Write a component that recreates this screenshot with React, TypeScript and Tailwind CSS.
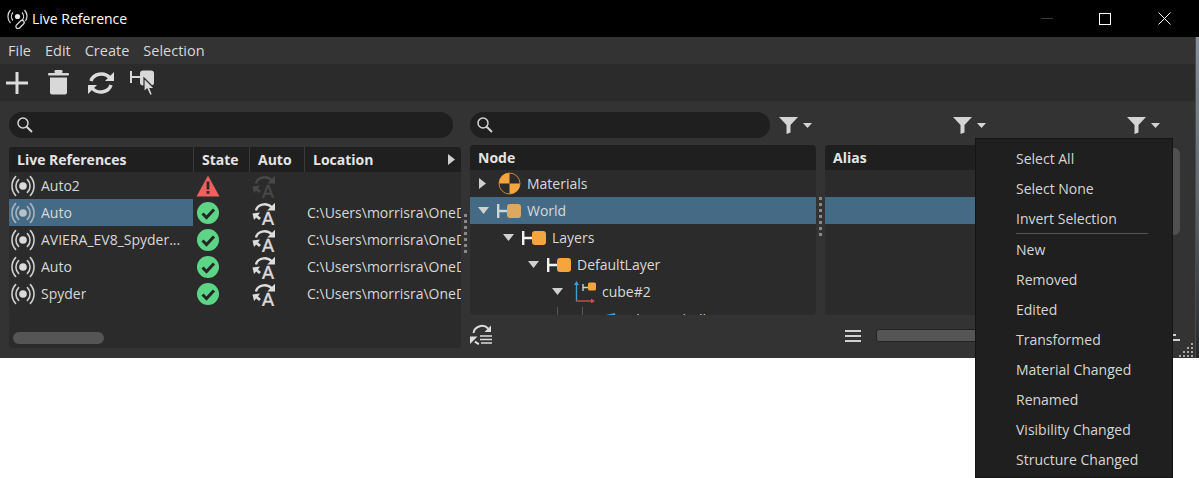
import React from "react";

const Broadcast = ({ dim = false }: { dim?: boolean }) => (
  <svg width="24" height="22" viewBox="0 0 24 22" fill="none" stroke={dim ? "#a9b4bc" : "#cfcfcf"} strokeLinecap="round" className="shrink-0">
    <circle cx="12" cy="11" r="3.8" fill={dim ? "#b9c0c6" : "#dadada"} stroke="none" />
    <path d="M7.6 4.6a9 9 0 0 0 0 12.8M16.4 4.6a9 9 0 0 1 0 12.8" strokeWidth="1.6" />
    <path d="M4.6 1.6a14 14 0 0 0 0 18.8M19.4 1.6a14 14 0 0 1 0 18.8" strokeWidth="1.6" />
  </svg>
);

const Check = () => (
  <svg width="24" height="24" viewBox="0 0 24 24" className="shrink-0">
    <circle cx="12" cy="12" r="11" fill="#5cd686" />
    <path d="M6.5 12.5l4 4 7.5-8" fill="none" stroke="#262626" strokeWidth="3" />
  </svg>
);

const Warn = () => (
  <svg width="24" height="22" viewBox="0 0 24 22" className="shrink-0">
    <path d="M12 0.5L23.5 21.5H0.5Z" fill="#f25f5f" />
    <rect x="10.6" y="6.5" width="2.8" height="8" fill="#2b2b2b" />
    <rect x="10.6" y="16" width="2.8" height="2.8" fill="#2b2b2b" />
  </svg>
);

const AutoIcon = ({ dim = false }: { dim?: boolean }) => {
  const c = dim ? "#484848" : "#dcdcdc";
  return (
    <svg width="24" height="24" viewBox="0 0 24 24" className="shrink-0">
      <path d="M4 9.5C5 4 14 0.5 20 6.5" fill="none" stroke={c} strokeWidth="2.4" />
      <path d="M23 1.8V9.6H15.2Z" fill={c} />
      <path d="M0.5 12.5L8 11.5L6 14.5L9 17L7 19L4.2 16.4L2 19Z" fill={c} />
      <text x="16" y="23.5" textAnchor="middle" fontFamily="'Liberation Sans',sans-serif" fontWeight="400" fontSize="18" stroke={c} strokeWidth="0.5" fill={c}>A</text>
    </svg>
  );
};

const HSquare = ({ dim = false }: { dim?: boolean }) => (
  <svg width="24" height="14" viewBox="0 0 24 14" className="shrink-0">
    <path d="M1.2 0V14M1.2 7H10" stroke={dim ? "#cfd4d8" : "#f2f2f2"} strokeWidth="2.4" fill="none" />
    <rect x="10" y="0" width="14" height="14" rx="3" fill={dim ? "#dda85f" : "#f5a53d"} />
  </svg>
);

const Materials = () => (
  <svg width="23" height="23" viewBox="0 0 23 23" className="shrink-0">
    <circle cx="11.5" cy="11.5" r="10.5" fill="#2b2b2b" stroke="#c98934" strokeWidth="1" />
    <path d="M11.5 11.5V1A10.5 10.5 0 0 0 1 11.5Z" fill="#f5a53d" />
    <path d="M11.5 11.5V22A10.5 10.5 0 0 0 22 11.5Z" fill="#f5a53d" />
  </svg>
);

const CubeIcon = () => (
  <svg width="23" height="22" viewBox="0 0 23 22" className="shrink-0">
    <path d="M2.5 20V3" stroke="#3d9fd2" strokeWidth="1.4" />
    <path d="M2.5 0L5 4H0Z" fill="#3d9fd2" />
    <path d="M2 20H18" stroke="#c94f4f" strokeWidth="1.4" />
    <path d="M21 20L17 17.5V22.5Z" fill="#c94f4f" />
    <path d="M9 3V10M9 6.5H14" stroke="#d0d0d0" strokeWidth="1.4" fill="none" />
    <rect x="14" y="1.5" width="8" height="8" rx="1.5" fill="#f5a53d" />
  </svg>
);

const Down = () => (
  <svg width="11" height="7" viewBox="0 0 11 7" className="shrink-0">
    <path d="M0 0H11L5.5 7Z" fill="#d0d0d0" />
  </svg>
);

const Right = () => (
  <svg width="7" height="11" viewBox="0 0 7 11" className="shrink-0">
    <path d="M0 0V11L7 5.5Z" fill="#d0d0d0" />
  </svg>
);

const Search = () => (
  <svg width="18" height="18" viewBox="0 0 18 18" fill="none" stroke="#d4d4d4" className="shrink-0">
    <circle cx="7" cy="7" r="5" strokeWidth="1.5" />
    <path d="M10.7 10.7L16 16" strokeWidth="2" />
  </svg>
);

const Filter = () => (
  <div className="flex items-center gap-[5px]">
    <svg width="19" height="17" viewBox="0 0 19 17">
      <path d="M0 0H19L11.5 8V15.5L7.5 17V8Z" fill="#d4d4d4" />
    </svg>
    <svg width="9" height="5" viewBox="0 0 9 5">
      <path d="M0 0H9L4.5 5Z" fill="#d4d4d4" />
    </svg>
  </div>
);

const Dots = () => (
  <div className="flex flex-col gap-[3px]">
    {[0, 1, 2, 3, 4, 5, 6].map((i) => (
      <div key={i} className="w-[3px] h-[3px] bg-[#8a8a8a]" />
    ))}
  </div>
);

const refs = [
  { name: "Auto2", warn: true },
  { name: "Auto", selected: true },
  { name: "AVIERA_EV8_Spyder..." },
  { name: "Auto" },
  { name: "Spyder" },
];

const menuTop = ["Select All", "Select None", "Invert Selection"];
const menuBottom = ["New", "Removed", "Edited", "Transformed", "Material Changed", "Renamed", "Visibility Changed", "Structure Changed"];

const MenuItem = ({ label }: { label: string }) => (
  <div className="h-[30px] flex items-center pl-[40px] text-[#d6d6d6]">{label}</div>
);

export default function App() {
  return (
    <div className="relative w-[1199px] h-[478px] bg-white overflow-hidden font-['Open_Sans',sans-serif] text-[14px] text-[#d8d8d8]">
      <div className="flex h-[358px]">
        <div className="w-[1195px] flex flex-col">
          {/* title bar */}
          <div className="h-[37px] bg-black flex items-center pl-[7px] text-white">
            <svg width="21" height="21" viewBox="0 0 21 21" fill="none" stroke="#d8d8d8" className="shrink-0">
              <circle cx="10.5" cy="8.5" r="2.6" fill="#e8e8e8" stroke="none" />
              <path d="M6 4.5a6 6 0 0 0 0 8M15 4.5a6 6 0 0 1 0 8M3.5 2a9.5 9.5 0 0 0 0 13M17.5 2a9.5 9.5 0 0 1 1 11" strokeWidth="1.2" />
              <path d="M9.5 17l4-4a2 2 0 0 1 3 3l-4 4a2 2 0 0 1-3-3Z" strokeWidth="1.3" />
            </svg>
            <span className="ml-[4px]">Live Reference</span>
            <div className="ml-auto flex items-center">
              <div className="w-[12px] h-px bg-[#3c3c3c] mr-[46px]" />
              <div className="w-[12px] h-[12px] border border-white mr-[47px]" />
              <svg width="13" height="13" viewBox="0 0 13 13" stroke="#fff" className="mr-[24px]">
                <path d="M0.5 0.5L12.5 12.5M12.5 0.5L0.5 12.5" strokeWidth="1" />
              </svg>
            </div>
          </div>
          {/* menu bar */}
          <div className="h-[27px] bg-[#333333] flex items-center pl-[8px] gap-[14px] text-[14.5px]">
            <span>File</span>
            <span>Edit</span>
            <span>Create</span>
            <span>Selection</span>
          </div>
          {/* toolbar */}
          <div className="h-[37px] bg-[#2b2b2b] flex items-center pl-[6px]">
            <svg width="22" height="22" viewBox="0 0 22 22" fill="#dcdcdc" className="shrink-0">
              <rect x="9.5" y="0" width="3" height="22" />
              <rect x="0" y="9.5" width="22" height="3" />
            </svg>
            <svg width="21" height="25" viewBox="0 0 21 25" fill="#d8d8d8" className="shrink-0 ml-[20px]">
              <rect x="0" y="3" width="21" height="2.5" rx="1" />
              <rect x="6.5" y="0" width="8" height="3" rx="1" />
              <path d="M2 7.5H19V22.5a2 2 0 0 1-2 2H4a2 2 0 0 1-2-2Z" />
            </svg>
            <svg width="28" height="24" viewBox="0 0 28 24" fill="none" className="shrink-0 ml-[18px]">
              <path d="M4 10C6 3 17 0 23 7" stroke="#dcdcdc" strokeWidth="3.4" />
              <path d="M27 1V10H18Z" fill="#dcdcdc" />
              <path d="M24 14C22 21 11 24 5 17" stroke="#dcdcdc" strokeWidth="3.4" />
              <path d="M1 23V14H10Z" fill="#dcdcdc" />
            </svg>
            <svg width="26" height="26" viewBox="0 0 26 26" className="shrink-0 ml-[15px]">
              <path d="M1 1V13M1 7H10" stroke="#d8d8d8" strokeWidth="2" fill="none" />
              <rect x="10" y="0.5" width="14" height="15" rx="3" fill="#d8d8d8" />
              <path d="M14 8V22L17 19L20 25.5L22.5 24.5L20 18.5H24.5Z" fill="#d8d8d8" stroke="#2b2b2b" strokeWidth="1.2" />
            </svg>
          </div>
          {/* main */}
          <div className="flex-1 bg-[#333333] flex">
            {/* left column */}
            <div className="w-[461px] ml-[9px] shrink-0 flex flex-col">
              <div className="mt-[11px] w-[444px] h-[26px] rounded-full bg-[#1f1f1f] flex items-center pl-[7px]">
                <Search />
              </div>
              <div className="mt-[9px] w-[452px] h-[201px] rounded-[4px] bg-[#2b2b2b] flex flex-col overflow-hidden">
                <div className="h-[25px] bg-[#1f1f1f] flex items-center font-bold shrink-0 text-[#e4e4e4]">
                  <div className="w-[184px] pl-[8px] h-full flex items-center">Live References</div>
                  <div className="w-[56px] pl-[8px] h-full flex items-center border-l border-[#3a3a3a]">State</div>
                  <div className="w-[55px] pl-[8px] h-full flex items-center border-l border-[#3a3a3a]">Auto</div>
                  <div className="flex-1 pl-[8px] pr-[6px] h-full flex items-center justify-between border-l border-[#3a3a3a]">
                    <span>Location</span>
                    <Right />
                  </div>
                </div>
                <div className="flex-1">
                  {refs.map((r, i) => (
                    <div key={i} className="h-[27px] flex items-center">
                      <div className={`w-[184px] h-full flex items-center pl-[2px] gap-[6px] ${r.selected ? "bg-[#456a85]" : ""}`}>
                        <Broadcast dim={r.selected} />
                        <span className="truncate">{r.name}</span>
                      </div>
                      <div className="w-[56px] h-full flex items-center pl-[3px]">
                        {r.warn ? <Warn /> : <Check />}
                      </div>
                      <div className="w-[55px] h-full flex items-center pl-[3px]">
                        <AutoIcon dim={r.warn} />
                      </div>
                      {!r.warn && (
                        <div className="flex-1 min-w-0 overflow-hidden whitespace-nowrap pl-[3px]">C:\Users\morrisra\OneDrive\Documents</div>
                      )}
                    </div>
                  ))}
                </div>
                <div className="ml-[4px] mb-[4px] w-[91px] h-[12px] rounded-full bg-[#555555] shrink-0" />
              </div>
            </div>
            {/* right column */}
            <div className="flex-1 flex flex-col min-w-0">
              <div className="mt-[11px] h-[26px] flex items-center">
                <div className="w-[300px] h-[26px] rounded-full bg-[#1f1f1f] flex items-center pl-[6px] shrink-0">
                  <Search />
                </div>
                <div className="ml-[9px]"><Filter /></div>
                <div className="ml-[141px]"><Filter /></div>
                <div className="ml-[141px]"><Filter /></div>
              </div>
              <div className="mt-[7px] h-[170px] flex">
                <div className="w-[346px] rounded-[4px] bg-[#2b2b2b] flex flex-col overflow-hidden shrink-0">
                  <div className="h-[25px] bg-[#1f1f1f] flex items-center pl-[8px] font-bold shrink-0 text-[#e4e4e4]">Node</div>
                  <div className="h-[27px] flex items-center pl-[9px] shrink-0">
                    <Right />
                    <div className="ml-[12px]"><Materials /></div>
                    <span className="ml-[6px]">Materials</span>
                  </div>
                  <div className="h-[27px] bg-[#456a85] flex items-center pl-[8px] shrink-0">
                    <Down />
                    <div className="ml-[8px]"><HSquare dim /></div>
                    <span className="ml-[6px]">World</span>
                  </div>
                  <div className="h-[27px] flex items-center pl-[33px] shrink-0">
                    <Down />
                    <div className="ml-[8px]"><HSquare /></div>
                    <span className="ml-[6px]">Layers</span>
                  </div>
                  <div className="h-[27px] flex items-center pl-[58px] shrink-0">
                    <Down />
                    <div className="ml-[8px]"><HSquare /></div>
                    <span className="ml-[6px]">DefaultLayer</span>
                  </div>
                  <div className="h-[27px] flex items-center pl-[82px] shrink-0">
                    <Down />
                    <div className="ml-[11px]"><CubeIcon /></div>
                    <span className="ml-[5px]">cube#2</span>
                  </div>
                  <div className="h-[27px] flex items-start shrink-0 pl-[87px]">
                    <div className="w-px h-[12px] bg-[#555555] mt-[2px]" />
                    <div className="w-px h-[12px] bg-[#555555] mt-[2px] ml-[24px]" />
                    <svg width="17" height="14" viewBox="0 0 17 14" className="ml-[17px] mt-[8px] shrink-0">
                      <path d="M1 3L15 0L17 12H3Z" fill="#3d9fd2" />
                    </svg>
                    <span className="ml-[4px] mt-[4px]">cube#2_shell#1</span>
                  </div>
                </div>
                <div className="w-[9px] shrink-0 relative">
                  <div className="absolute left-[3px] top-[52px]"><Dots /></div>
                </div>
                <div className="w-[340px] rounded-[4px] bg-[#2b2b2b] flex flex-col overflow-hidden shrink-0">
                  <div className="h-[25px] bg-[#1f1f1f] flex items-center pl-[8px] font-bold shrink-0 text-[#e4e4e4]">Alias</div>
                  <div className="h-[27px] shrink-0" />
                  <div className="h-[27px] bg-[#456a85] shrink-0" />
                </div>
              </div>
              <div className="flex-1 flex items-center relative">
                <svg width="22" height="22" viewBox="0 0 22 22" fill="none" className="shrink-0 -mt-[3px]">
                  <path d="M3.5 9C4 3 13 -1 18 4.5" stroke="#dcdcdc" strokeWidth="2" />
                  <path d="M21 1.5V8H14.5Z" fill="#dcdcdc" />
                  <path d="M5 17.5C6 18.5 7 19.5 9 20" stroke="#dcdcdc" strokeWidth="2" />
                  <path d="M0 20V12.5H7.5Z" fill="#dcdcdc" />
                  <path d="M10 12H22M10 15.5H22M11 19H22" stroke="#dcdcdc" strokeWidth="1.6" />
                </svg>
                <svg width="16" height="14" viewBox="0 0 16 14" stroke="#d0d0d0" strokeWidth="2" className="ml-[353px] shrink-0 -mt-[2px]">
                  <path d="M0 2H16M0 7H16M0 12H16" />
                </svg>
                <div className="ml-[15px] w-[200px] h-[13px] rounded-[3px] bg-[#555555] border border-[#222222] -mt-[2px] shrink-0" />
              </div>
            </div>
          </div>
        </div>
        {/* desktop sliver */}
        <div className="flex-1 flex flex-col">
          <div className="h-[37px] bg-black" />
          <div className="flex-1 border-l border-[#4a4a4a] bg-linear-to-b from-[#86909a] via-[#5f666c] to-[#26282b]" />
        </div>
      </div>

      {/* scrollbar behind popup */}
      <div className="absolute left-[1160px] top-[148px] w-[20px] h-[87px] rounded-r-[6px] bg-[#505050]" />
      <div className="absolute left-[1172px] top-[339px] w-[8px] h-[2px] bg-[#d0d0d0]" />
      <div className="absolute left-[1172px] top-[334px] w-[4px] h-[2px] bg-[#d0d0d0]" />
      {/* left splitter */}
      <div className="absolute left-[464px] top-[214px]"><Dots /></div>
      {/* grip */}
      <svg width="16" height="16" viewBox="0 0 16 16" fill="#a8a8a8" className="absolute left-[1178px] top-[342px]">
        <rect x="13" y="1" width="2" height="2" />
        <rect x="9" y="5" width="2" height="2" /><rect x="13" y="5" width="2" height="2" />
        <rect x="5" y="9" width="2" height="2" /><rect x="9" y="9" width="2" height="2" /><rect x="13" y="9" width="2" height="2" />
        <rect x="1" y="13" width="2" height="2" /><rect x="5" y="13" width="2" height="2" /><rect x="9" y="13" width="2" height="2" /><rect x="13" y="13" width="2" height="2" />
      </svg>

      {/* popup menu */}
      <div className="absolute left-[975px] top-[138px] w-[198px] h-[340px] bg-[#1f1f1f] border border-[#141414] pt-[4px]">
        {menuTop.map((m) => <MenuItem key={m} label={m} />)}
        <div className="ml-[40px] w-[132px] h-px bg-[#555555]" />
        {menuBottom.map((m) => <MenuItem key={m} label={m} />)}
      </div>
    </div>
  );
}
